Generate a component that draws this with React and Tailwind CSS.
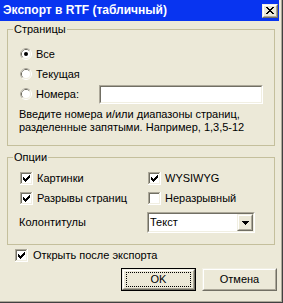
import React from 'react';

const Radio = ({ checked }) => (
  <svg width="12" height="12" viewBox="0 0 12 12" className="shrink-0">
    <circle cx="6" cy="6" r="5.5" fill="none" stroke="#ffffff" />
    <path d="M2.11 9.89 A5.5 5.5 0 0 1 9.89 2.11" fill="none" stroke="#aca899" />
    <circle cx="6" cy="6" r="4.5" fill="none" stroke="#f1efe2" />
    <path d="M2.82 9.18 A4.5 4.5 0 0 1 9.18 2.82" fill="none" stroke="#716f64" />
    <circle cx="6" cy="6" r="4" fill="#ffffff" />
    {checked && <circle cx="6" cy="6" r="2" fill="#000000" />}
  </svg>
);

const checkCols = [
  [3, 5], [4, 6], [5, 7], [6, 6], [7, 5], [8, 4], [9, 3],
];

const Check = ({ checked }) => (
  <svg width="13" height="13" viewBox="0 0 13 13" className="shrink-0" shapeRendering="crispEdges">
    <rect x="0" y="0" width="13" height="13" fill="#ffffff" />
    <rect x="0" y="0" width="12" height="1" fill="#aca899" />
    <rect x="0" y="0" width="1" height="12" fill="#aca899" />
    <rect x="1" y="1" width="11" height="11" fill="#f1efe2" />
    <rect x="1" y="1" width="10" height="1" fill="#716f64" />
    <rect x="1" y="1" width="1" height="10" fill="#716f64" />
    <rect x="2" y="2" width="9" height="9" fill="#ffffff" />
    {checked && checkCols.map(([x, y]) => (
      <rect key={x} x={x} y={y} width="1" height="3" fill="#000000" />
    ))}
  </svg>
);

const closeRows = [
  [[0, 2], [6, 2]],
  [[1, 2], [5, 2]],
  [[2, 4]],
  [[3, 2]],
  [[2, 4]],
  [[1, 2], [5, 2]],
  [[0, 2], [6, 2]],
];

const CloseGlyph = () => (
  <svg width="8" height="7" viewBox="0 0 8 7" shapeRendering="crispEdges">
    {closeRows.map((row, y) =>
      row.map(([x, w]) => <rect key={`${y}-${x}`} x={x} y={y} width={w} height="1" fill="#000000" />)
    )}
  </svg>
);

const Raised = ({ className = '', children }) => (
  <div className={`border border-t-[#f1efe2] border-l-[#f1efe2] border-r-[#716f64] border-b-[#716f64] ${className}`}>
    <div className="h-full w-full border border-t-white border-l-white border-r-[#aca899] border-b-[#aca899] bg-[#ece9d8] flex items-center justify-center">
      {children}
    </div>
  </div>
);

const Sunken = ({ className = '', children }) => (
  <div className={`border border-t-[#aca899] border-l-[#aca899] border-r-white border-b-white ${className}`}>
    <div className="h-full w-full border border-t-[#716f64] border-l-[#716f64] border-r-[#f1efe2] border-b-[#f1efe2] bg-white flex items-center">
      {children}
    </div>
  </div>
);

const GroupBox = ({ title, className = '', children }) => (
  <fieldset className={`border border-[#c4bf9c] ${className}`}>
    <legend className="ml-[5px] px-[1px]">{title}</legend>
    {children}
  </fieldset>
);

export default function App() {
  return (
    <div className="w-[283px] h-[303px] bg-[#ece9d8] border-r border-b border-[#404040] font-['Liberation_Sans',Arial,sans-serif] text-[11px] leading-[13px] text-black">
      <div className="h-full border-r border-b border-[#aca899] pr-[2px] pb-[2px] flex flex-col">
        <div className="h-[21px] shrink-0 bg-[#0834f0] flex items-center pl-[3px] pr-[1px]">
          <span className="flex-1 font-bold text-[12px] text-white whitespace-nowrap">Экспорт в RTF (табличный)</span>
          <Raised className="w-[16px] h-[14px]">
            <CloseGlyph />
          </Raised>
        </div>

        <div className="flex flex-col pl-[7px] pr-[4px]">
          <GroupBox title="Страницы" className="mt-[2px]">
            <div className="pt-[8px] pb-[11px]">
              <div className="h-[20px] pl-[12px] flex items-center">
                <Radio checked />
                <span className="ml-[4px]">Все</span>
              </div>
              <div className="h-[20px] pl-[12px] flex items-center">
                <Radio />
                <span className="ml-[4px]">Текущая</span>
              </div>
              <div className="h-[20px] pl-[12px] flex items-center">
                <Radio />
                <span className="ml-[4px] w-[63px]">Номера:</span>
                <Sunken className="w-[164px] h-[19px]" />
              </div>
              <p className="mt-[4px] pl-[11px]">
                Введите номера и/или диапазоны страниц,
                <br />
                разделенные запятыми. Например, 1,3,5-12
              </p>
            </div>
          </GroupBox>

          <GroupBox title="Опции" className="mt-[5px]">
            <div className="pt-[4px] pb-[11px]">
              <div className="h-[20px] pl-[12px] flex items-center">
                <div className="w-[128px] flex items-center">
                  <Check checked />
                  <span className="ml-[4px]">Картинки</span>
                </div>
                <Check checked />
                <span className="ml-[4px]">WYSIWYG</span>
              </div>
              <div className="h-[20px] pl-[12px] flex items-center">
                <div className="w-[128px] flex items-center">
                  <Check checked />
                  <span className="ml-[4px] whitespace-nowrap">Разрывы страниц</span>
                </div>
                <Check />
                <span className="ml-[4px]">Неразрывный</span>
              </div>
              <div className="mt-[4px] pl-[11px] flex items-center">
                <span className="w-[128px]">Колонтитулы</span>
                <Sunken className="w-[108px] h-[21px]">
                  <span className="flex-1 pl-[1px]">Текст</span>
                  <Raised className="w-[16px] h-full">
                    <svg width="7" height="4" viewBox="0 0 7 4" shapeRendering="crispEdges">
                      <rect x="0" y="0" width="7" height="1" fill="#000" />
                      <rect x="1" y="1" width="5" height="1" fill="#000" />
                      <rect x="2" y="2" width="3" height="1" fill="#000" />
                      <rect x="3" y="3" width="1" height="1" fill="#000" />
                    </svg>
                  </Raised>
                </Sunken>
              </div>
            </div>
          </GroupBox>

          <div className="h-[20px] pl-[8px] flex items-center">
            <Check checked />
            <span className="ml-[5px]">Открыть после экспорта</span>
          </div>

          <div className="mt-[3px] -mr-[2px] flex justify-end gap-[6px]">
            <div className="w-[75px] h-[23px] border border-black">
              <Raised className="h-full w-full">
                <div className="w-[65px] h-[15px] border border-dotted border-black flex items-center justify-center">
                  OK
                </div>
              </Raised>
            </div>
            <Raised className="w-[75px] h-[23px]">Отмена</Raised>
          </div>
        </div>
      </div>
    </div>
  );
}
